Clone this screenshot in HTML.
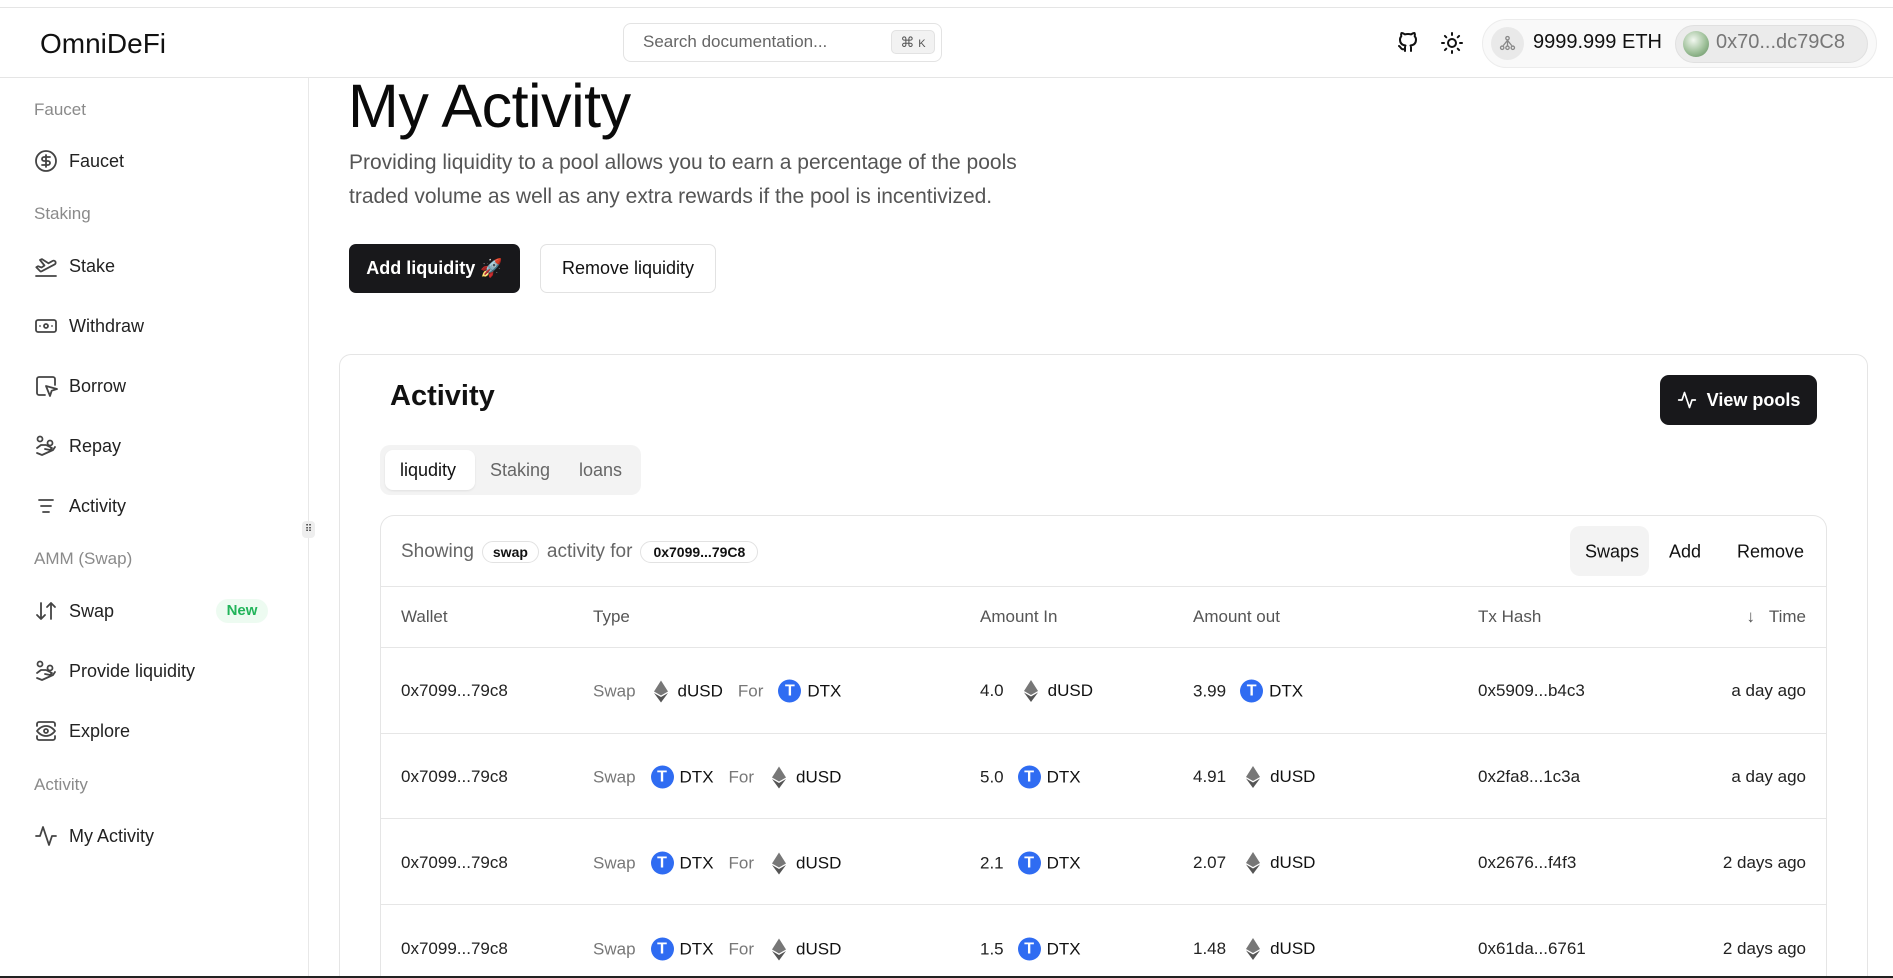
<!DOCTYPE html>
<html><head><meta charset="utf-8"><style>
*{box-sizing:border-box;margin:0;padding:0}
html,body{width:1893px;height:978px;overflow:hidden}
body{background:#fff;font-family:"Liberation Sans",sans-serif;color:#111}
#w{position:relative;width:1893px;height:978px;overflow:hidden}
.a{position:absolute}
.topline{left:0;top:7px;width:1893px;height:1px;background:#e5e5e5}
.hdr{left:0;top:77px;width:1893px;height:1px;background:#e5e5e5}
.side{left:308px;top:78px;width:1px;height:898px;background:#e8e8e8}
.sh{left:34px;font-size:17px;color:#8a8a8a;transform:translateY(-50%)}
.si{left:34px;font-size:18px;color:#222;display:flex;align-items:center;transform:translateY(-50%)}
.si svg{width:24px;height:24px;margin-right:11px;stroke:#444;fill:none;stroke-width:1.8;stroke-linecap:round;stroke-linejoin:round}
.btn{border-radius:7px;display:flex;align-items:center;justify-content:center;font-size:18px;font-weight:bold}
.th{font-size:17px;color:#555;transform:translateY(-50%)}
.td{font-size:17px;color:#222;display:flex;align-items:center;transform:translateY(-50%);white-space:nowrap}
.g{color:#777}
.tk{display:inline-flex;align-items:center;color:#111}
.rl{left:381px;width:1445px;height:1px;background:#e6e6e6}
.dtx{display:inline-block;width:23px;height:23px;border-radius:50%;background:#2f6cf2;color:#fff;font-weight:bold;font-size:16px;text-align:center;line-height:23px;margin-right:6px}
</style></head><body><div id="w">
<div class="a topline"></div>
<div class="a" style="left:40px;top:28px;font-size:28px;font-weight:500;color:#111">OmniDeFi</div>
<div class="a" style="left:623px;top:23px;width:319px;height:39px;border:1px solid #e3e3e3;border-radius:8px"></div>
<div class="a" style="left:643px;top:32px;font-size:17px;color:#666">Search documentation...</div>
<div class="a" style="left:891px;top:30px;width:44px;height:24px;background:#f2f2f2;border:1px solid #e2e2e2;border-radius:5px;font-size:14px;color:#555;text-align:center;line-height:22px">⌘ <span style="font-size:11px">K</span></div>
<svg class="a" style="left:1396px;top:30px" width="24" height="24" viewBox="0 0 24 24" fill="none" stroke="#111" stroke-width="2" stroke-linecap="round" stroke-linejoin="round"><path d="M9 19c-4.3 1.4-4.3-2.5-6-3m12 5v-3.5c0-1 .1-1.4-.5-2 2.8-.3 5.5-1.4 5.5-6a4.6 4.6 0 0 0-1.3-3.2 4.2 4.2 0 0 0-.1-3.2s-1.1-.3-3.5 1.3a12.3 12.3 0 0 0-6.2 0C6.5 2.8 5.4 3.1 5.4 3.1a4.2 4.2 0 0 0-.1 3.2A4.6 4.6 0 0 0 4 9.5c0 4.6 2.7 5.7 5.5 6-.6.6-.6 1.2-.5 2V21"/></svg>
<svg class="a" style="left:1440px;top:31px" width="24" height="24" viewBox="0 0 24 24" fill="none" stroke="#111" stroke-width="2" stroke-linecap="round"><circle cx="12" cy="12" r="4"/><path d="M12 2v2M12 20v2M4.9 4.9l1.4 1.4M17.7 17.7l1.4 1.4M2 12h2M20 12h2M6.3 17.7l-1.4 1.4M19.1 4.9l-1.4 1.4"/></svg>
<div class="a" style="left:1482px;top:19px;width:395px;height:49px;border-radius:25px;background:#f9f9f9;border:1px solid #ececec"></div>
<div class="a" style="left:1491px;top:27px;width:33px;height:33px;border-radius:50%;background:#e9e9e9"></div>
<svg class="a" style="left:1499px;top:35px" width="17" height="17" viewBox="0 0 16 16" fill="none" stroke="#888" stroke-width="1.2"><circle cx="8" cy="3" r="1.6"/><circle cx="3" cy="12" r="1.6"/><circle cx="13" cy="12" r="1.6"/><circle cx="8" cy="12" r="1.6"/><path d="M8 5l-4 5M8 5l4 5M8 5v5"/></svg>
<div class="a" style="left:1533px;top:31px;font-size:20px;color:#111">9999.999 ETH</div>
<div class="a" style="left:1675px;top:25px;width:193px;height:38px;border-radius:19px;background:#ebebeb;border:1px solid #e0e0e0"></div>
<div class="a" style="left:1683px;top:31px;width:26px;height:26px;border-radius:50%;background:radial-gradient(circle at 40% 35%,#f2f8f0,#9dbf98 55%,#5e8a5c)"></div>
<div class="a" style="left:1716px;top:31px;font-size:20px;color:#777">0x70...dc79C8</div>
<div class="a hdr"></div>
<div class="a side"></div>
<div class="a" style="left:302px;top:521px;width:13px;height:17px;border-radius:4px;background:#eee;font-size:10px;color:#333;text-align:center;line-height:17px">⠿</div>

<div class="a sh" style="top:110px">Faucet</div>
<div class="a si" style="top:161px"><svg viewBox="0 0 24 24"><circle cx="12" cy="12" r="10"/><path d="M16 8h-6a2 2 0 1 0 0 4h4a2 2 0 1 1 0 4H8M12 18V6"/></svg>Faucet</div>
<div class="a sh" style="top:214px">Staking</div>
<div class="a si" style="top:266px"><svg viewBox="0 0 24 24"><path d="M2 22h20M6.4 17.4 2.3 13.3 4 12.2l3.5 1.3 3-2L6 6l2-.9 6.4 4.2 4.3-2.4a2 2 0 0 1 2.1 3.4L7.8 17.2a1.5 1.5 0 0 1-1.4.2z"/></svg>Stake</div>
<div class="a si" style="top:326px"><svg viewBox="0 0 24 24"><rect x="2" y="6" width="20" height="12" rx="2"/><circle cx="12" cy="12" r="2"/><path d="M6 12h.01M18 12h.01"/></svg>Withdraw</div>
<div class="a si" style="top:386px"><svg viewBox="0 0 24 24"><path d="M21 11V5a2 2 0 0 0-2-2H5a2 2 0 0 0-2 2v14a2 2 0 0 0 2 2h6M12 12l4 10 1.7-5.3L23 15z"/></svg>Borrow</div>
<div class="a si" style="top:446px"><svg viewBox="0 0 24 24"><circle cx="6" cy="5" r="2.5"/><circle cx="16" cy="9" r="2.5"/><path d="M3 14l4-3h5l6 3-2 2-5-1M3 19l5 2 11-5 2-3"/></svg>Repay</div>
<div class="a si" style="top:506px"><svg viewBox="0 0 24 24"><path d="M5 6h14M7 12h10M9 18h6"/></svg>Activity</div>
<div class="a sh" style="top:559px">AMM (Swap)</div>
<div class="a si" style="top:611px"><svg viewBox="0 0 24 24"><path d="M7 4v16M3 16l4 4 4-4M17 20V4M13 8l4-4 4 4"/></svg>Swap</div>
<div class="a" style="left:216px;top:599px;width:52px;height:24px;border-radius:12px;background:#edfbf1;color:#22b45a;font-size:15px;font-weight:bold;text-align:center;line-height:24px">New</div>
<div class="a si" style="top:671px"><svg viewBox="0 0 24 24"><circle cx="6" cy="5" r="2.5"/><circle cx="16" cy="9" r="2.5"/><path d="M3 14l4-3h5l6 3-2 2-5-1M3 19l5 2 11-5 2-3"/></svg>Provide liquidity</div>
<div class="a si" style="top:731px"><svg viewBox="0 0 24 24"><path d="M3 7V5a2 2 0 0 1 2-2h14a2 2 0 0 1 2 2v2M3 17v2a2 2 0 0 0 2 2h14a2 2 0 0 0 2-2v-2"/><path d="M3 12s3.5-5 9-5 9 5 9 5-3.5 5-9 5-9-5-9-5z"/><circle cx="12" cy="12" r="2"/></svg>Explore</div>
<div class="a sh" style="top:785px">Activity</div>
<div class="a si" style="top:836px"><svg viewBox="0 0 24 24"><path d="M22 12h-4l-3 9L9 3l-3 9H2"/></svg>My Activity</div>

<div class="a" style="left:348px;top:71px;font-size:61px;font-weight:500;letter-spacing:-0.5px;color:#0a0a0a">My Activity</div>
<div class="a" style="left:349px;top:146px;font-size:21px;line-height:34px;color:#555;width:720px">Providing liquidity to a pool allows you to earn a percentage of the pools traded volume as well as any extra rewards if the pool is incentivized.</div>
<div class="a btn" style="left:349px;top:244px;width:171px;height:49px;background:#18181b;color:#fff">Add liquidity 🚀</div>
<div class="a btn" style="left:540px;top:244px;width:176px;height:49px;border:1px solid #e2e2e2;color:#111;font-weight:500">Remove liquidity</div>

<div class="a" style="left:339px;top:354px;width:1529px;height:624px;border:1px solid #e5e5e5;border-bottom:none;border-radius:12px 12px 0 0"></div>
<div class="a" style="left:390px;top:380px;font-size:29px;font-weight:bold">Activity</div>
<div class="a btn" style="left:1660px;top:375px;width:157px;height:50px;background:#18181b;color:#fff;border-radius:9px"><svg width="20" height="20" viewBox="0 0 24 24" fill="none" stroke="#fff" stroke-width="2" stroke-linecap="round" stroke-linejoin="round" style="margin-right:10px"><path d="M22 12h-4l-3 9L9 3l-3 9H2"/></svg>View pools</div>
<div class="a" style="left:380px;top:445px;width:261px;height:50px;background:#f3f3f3;border-radius:10px"></div>
<div class="a" style="left:385px;top:450px;width:90px;height:40px;background:#fff;border-radius:8px;box-shadow:0 1px 2px rgba(0,0,0,.08)"></div>
<div class="a" style="left:400px;top:460px;font-size:18px;color:#111">liqudity</div>
<div class="a" style="left:490px;top:460px;font-size:18px;color:#666">Staking</div>
<div class="a" style="left:579px;top:460px;font-size:18px;color:#666">loans</div>

<div class="a" style="left:380px;top:515px;width:1447px;height:462px;border:1px solid #e5e5e5;border-bottom:none;border-radius:14px 14px 0 0"></div>
<div class="a td" style="left:401px;top:552px;color:#666;font-size:19px">Showing <span style="margin:0 8px;border:1px solid #e2e2e2;border-radius:12px;padding:2px 10px;font-size:14px;font-weight:bold;color:#111">swap</span> activity for <span style="margin-left:8px;border:1px solid #e2e2e2;border-radius:12px;padding:2px 12px;font-size:14px;font-weight:bold;color:#111">0x7099...79C8</span></div>
<div class="a" style="left:1570px;top:526px;width:79px;height:50px;background:#f3f3f3;border-radius:10px"></div>
<div class="a td" style="left:1585px;top:552px;font-size:18px;color:#111">Swaps</div>
<div class="a td" style="left:1669px;top:552px;font-size:18px;color:#111">Add</div>
<div class="a td" style="left:1737px;top:552px;font-size:18px;color:#111">Remove</div>
<div class="a rl" style="top:586px"></div>
<div class="a th" style="left:401px;top:617px">Wallet</div>
<div class="a th" style="left:593px;top:617px">Type</div>
<div class="a th" style="left:980px;top:617px">Amount In</div>
<div class="a th" style="left:1193px;top:617px">Amount out</div>
<div class="a th" style="left:1478px;top:617px">Tx Hash</div>
<div class="a th" style="right:87px;top:617px">↓&nbsp;&nbsp; Time</div>
<div class="a rl" style="top:647px"></div>
<div class="a rl" style="top:733px"></div>
<div class="a rl" style="top:818px"></div>
<div class="a rl" style="top:904px"></div>

<div class="a td" style="left:401px;top:691px">0x7099...79c8</div>
<div class="a td" style="left:593px;top:691px"><span class="g">Swap</span><span class="tk" style="margin-left:18px"><svg width="14" height="22" viewBox="0 0 14 22" style="margin-right:10px"><path d="M7 0L0 11l7 4 7-4z" fill="#777"/><path d="M7 16.5L0 12.5 7 22l7-9.5z" fill="#555"/></svg>dUSD</span><span class="g" style="margin-left:15px">For</span><span class="tk" style="margin-left:15px"><span class="dtx">T</span>DTX</span></div>
<div class="a td" style="left:980px;top:691px">4.0<span class="tk" style="margin-left:20px"><svg width="14" height="22" viewBox="0 0 14 22" style="margin-right:10px"><path d="M7 0L0 11l7 4 7-4z" fill="#777"/><path d="M7 16.5L0 12.5 7 22l7-9.5z" fill="#555"/></svg>dUSD</span></div>
<div class="a td" style="left:1193px;top:691px">3.99<span class="tk" style="margin-left:14px"><span class="dtx">T</span>DTX</span></div>
<div class="a td" style="left:1478px;top:691px">0x5909...b4c3</div>
<div class="a td" style="right:87px;top:691px">a day ago</div>

<div class="a td" style="left:401px;top:777px">0x7099...79c8</div>
<div class="a td" style="left:593px;top:777px"><span class="g">Swap</span><span class="tk" style="margin-left:15px"><span class="dtx">T</span>DTX</span><span class="g" style="margin-left:15px">For</span><span class="tk" style="margin-left:18px"><svg width="14" height="22" viewBox="0 0 14 22" style="margin-right:10px"><path d="M7 0L0 11l7 4 7-4z" fill="#777"/><path d="M7 16.5L0 12.5 7 22l7-9.5z" fill="#555"/></svg>dUSD</span></div>
<div class="a td" style="left:980px;top:777px">5.0<span class="tk" style="margin-left:14px"><span class="dtx">T</span>DTX</span></div>
<div class="a td" style="left:1193px;top:777px">4.91<span class="tk" style="margin-left:20px"><svg width="14" height="22" viewBox="0 0 14 22" style="margin-right:10px"><path d="M7 0L0 11l7 4 7-4z" fill="#777"/><path d="M7 16.5L0 12.5 7 22l7-9.5z" fill="#555"/></svg>dUSD</span></div>
<div class="a td" style="left:1478px;top:777px">0x2fa8...1c3a</div>
<div class="a td" style="right:87px;top:777px">a day ago</div>

<div class="a td" style="left:401px;top:863px">0x7099...79c8</div>
<div class="a td" style="left:593px;top:863px"><span class="g">Swap</span><span class="tk" style="margin-left:15px"><span class="dtx">T</span>DTX</span><span class="g" style="margin-left:15px">For</span><span class="tk" style="margin-left:18px"><svg width="14" height="22" viewBox="0 0 14 22" style="margin-right:10px"><path d="M7 0L0 11l7 4 7-4z" fill="#777"/><path d="M7 16.5L0 12.5 7 22l7-9.5z" fill="#555"/></svg>dUSD</span></div>
<div class="a td" style="left:980px;top:863px">2.1<span class="tk" style="margin-left:14px"><span class="dtx">T</span>DTX</span></div>
<div class="a td" style="left:1193px;top:863px">2.07<span class="tk" style="margin-left:20px"><svg width="14" height="22" viewBox="0 0 14 22" style="margin-right:10px"><path d="M7 0L0 11l7 4 7-4z" fill="#777"/><path d="M7 16.5L0 12.5 7 22l7-9.5z" fill="#555"/></svg>dUSD</span></div>
<div class="a td" style="left:1478px;top:863px">0x2676...f4f3</div>
<div class="a td" style="right:87px;top:863px">2 days ago</div>

<div class="a td" style="left:401px;top:949px">0x7099...79c8</div>
<div class="a td" style="left:593px;top:949px"><span class="g">Swap</span><span class="tk" style="margin-left:15px"><span class="dtx">T</span>DTX</span><span class="g" style="margin-left:15px">For</span><span class="tk" style="margin-left:18px"><svg width="14" height="22" viewBox="0 0 14 22" style="margin-right:10px"><path d="M7 0L0 11l7 4 7-4z" fill="#777"/><path d="M7 16.5L0 12.5 7 22l7-9.5z" fill="#555"/></svg>dUSD</span></div>
<div class="a td" style="left:980px;top:949px">1.5<span class="tk" style="margin-left:14px"><span class="dtx">T</span>DTX</span></div>
<div class="a td" style="left:1193px;top:949px">1.48<span class="tk" style="margin-left:20px"><svg width="14" height="22" viewBox="0 0 14 22" style="margin-right:10px"><path d="M7 0L0 11l7 4 7-4z" fill="#777"/><path d="M7 16.5L0 12.5 7 22l7-9.5z" fill="#555"/></svg>dUSD</span></div>
<div class="a td" style="left:1478px;top:949px">0x61da...6761</div>
<div class="a td" style="right:87px;top:949px">2 days ago</div>
<div class="a" style="left:0;top:976px;width:1893px;height:2px;background:#222"></div>
</div></body></html>
